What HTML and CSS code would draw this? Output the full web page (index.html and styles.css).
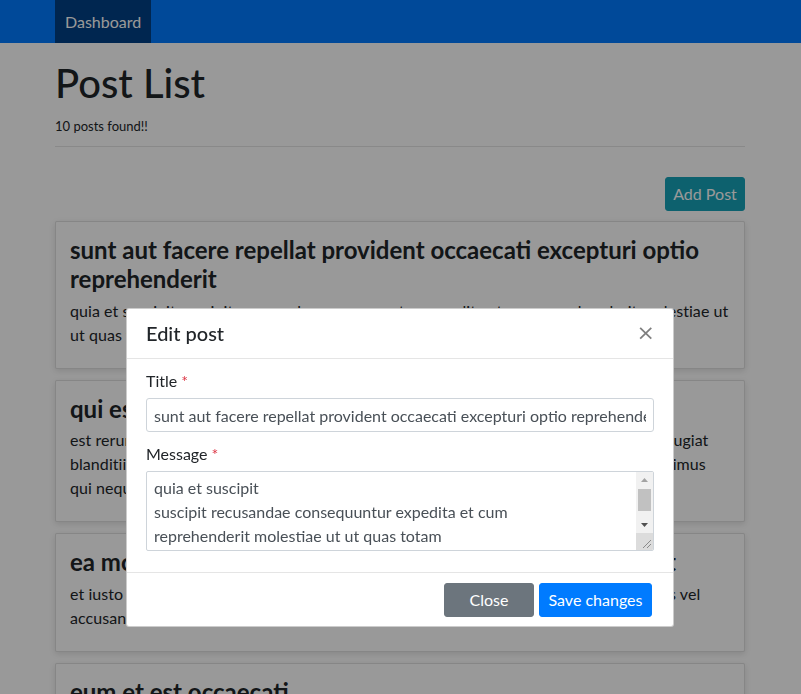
FILE: index.html
```html
<!DOCTYPE html>
<html lang="en">
<head>
<meta charset="utf-8">
<title>Post List</title>
<link rel="stylesheet" href="styles.css">
</head>
<body>
<nav class="navbar">
  <div class="container nav-inner">
    <a class="nav-link active" href="#">Dashboard</a>
  </div>
</nav>

<main class="container">
  <h1 class="page-title">Post List</h1>
  <p class="count">10 posts found!!</p>
  <hr class="divider">
  <div class="toolbar">
    <button class="btn btn-info">Add Post</button>
  </div>

  <div class="card">
    <h3 class="card-title">sunt aut facere repellat provident occaecati excepturi optio reprehenderit</h3>
    <p class="card-text">quia et suscipit suscipit recusandae consequuntur expedita et cum reprehenderit molestiae ut ut quas totam nostrum rerum est autem sunt rem eveniet architecto</p>
  </div>
  <div class="card">
    <h3 class="card-title">qui est esse</h3>
    <p class="card-text">est rerum tempore vitae sequi sint nihil reprehenderit dolor beatae ea dolores neque fugiat blanditiis voluptate porro vel nihil molestiae ut reiciendis qui aperiam non debitis possimus qui neque nisi nulla</p>
  </div>
  <div class="card">
    <h3 class="card-title">ea molestias quasi exercitationem repellat qui ipsa sit aut</h3>
    <p class="card-text">et iusto sed quo iure voluptatem occaecati omnis eligendi aut ad voluptatem doloribus vel accusantium quis pariatur molestiae porro eius odio et labore et velit aut</p>
  </div>
  <div class="card">
    <h3 class="card-title">eum et est occaecati</h3>
    <p class="card-text">ullam et saepe reiciendis voluptatem adipisci sit amet autem assumenda provident rerum culpa quis hic commodi nesciunt rem tenetur doloremque ipsam iure quis sunt voluptatem rerum illo velit</p>
  </div>
</main>

<div class="backdrop"></div>

<div class="modal">
  <div class="modal-dialog">
    <div class="modal-header">
      <h5 class="modal-title">Edit post</h5>
      <button class="close" aria-label="Close">×</button>
    </div>
    <div class="modal-body">
      <div class="form-group">
        <label class="form-label">Title <span class="req">*</span></label>
        <input class="form-control" type="text" value="sunt aut facere repellat provident occaecati excepturi optio reprehenderit">
      </div>
      <div class="form-group">
        <label class="form-label">Message <span class="req">*</span></label>
        <div class="textarea-box">
          <textarea class="textarea" rows="3">quia et suscipit
suscipit recusandae consequuntur expedita et cum
reprehenderit molestiae ut ut quas totam
nostrum rerum est autem sunt rem eveniet architecto</textarea>
          <div class="vscroll" aria-hidden="true">
            <div class="sb-btn">
              <svg width="7" height="4" viewBox="0 0 7 4"><path d="M0 4 L3.5 0 L7 4 Z" fill="#a3a3a3"/></svg>
            </div>
            <div class="sb-track"><div class="sb-thumb"></div></div>
            <div class="sb-btn">
              <svg width="7" height="4" viewBox="0 0 7 4"><path d="M0 0 L7 0 L3.5 4 Z" fill="#505050"/></svg>
            </div>
            <div class="sb-resizer">
              <svg width="17" height="17" viewBox="0 0 17 17"><path d="M15 7 L7 15 M15 11 L11 15" stroke="#8a8a8a" stroke-width="1" fill="none"/></svg>
            </div>
          </div>
        </div>
      </div>
    </div>
    <div class="modal-footer">
      <button class="btn btn-secondary">Close</button>
      <button class="btn btn-primary">Save changes</button>
    </div>
  </div>
</div>
</body>
</html>
```

FILE: styles.css
```css
* { box-sizing: border-box; }

html, body {
  margin: 0;
  padding: 0;
  height: 100%;
  overflow: hidden;
}

body {
  font-family: "Lato", "Noto Sans", sans-serif;
  font-size: 16px;
  line-height: 1.5;
  color: #212529;
  background: #ffffff;
}

.container {
  width: 720px;
  margin: 0 auto 0 40px;
  padding: 0 15px;
}

/* Navbar */
.navbar {
  background: #007bff;
  height: 43px;
}
.nav-inner {
  display: flex;
  height: 100%;
}
.nav-link {
  display: block;
  padding: 0 10px;
  line-height: 43px;
  color: #ffffff;
  text-decoration: none;
  font-size: 16px;
}
.nav-link.active {
  background: #004085;
}

/* Header */
.page-title {
  margin: 16px 0 0;
  font-size: 40px;
  font-weight: 500;
  line-height: 1.2;
}
.count {
  margin: 9px 0 0;
  font-size: 13px;
  line-height: 20px;
}
.divider {
  margin: 10px 0 0;
  border: 0;
  border-top: 1px solid rgba(0,0,0,.1);
}
.toolbar {
  display: flex;
  justify-content: flex-end;
  margin-top: 30px;
  margin-bottom: 10px;
}

/* Buttons */
.btn {
  font-family: inherit;
  font-size: 16px;
  line-height: 24px;
  height: 34px;
  padding: 0 7px;
  border: 1px solid transparent;
  border-radius: 3px;
  color: #ffffff;
  white-space: nowrap;
  cursor: pointer;
}
.btn-info { background: #17a2b8; border-color: #17a2b8; min-width: 80px; }
.btn-secondary { background: #6c757d; border-color: #6c757d; width: 90px; }
.btn-primary { background: #007bff; border-color: #007bff; width: 113px; }

/* Cards */
.card {
  background: #ffffff;
  border: 1px solid rgba(0,0,0,.125);
  border-radius: 2px;
  box-shadow: 0 2px 6px rgba(0,0,0,.12);
  padding: 14px 14px 15px;
  margin-bottom: 11px;
}
.card-title {
  margin: 0 0 5px;
  font-size: 24px;
  font-weight: 700;
  line-height: 1.2;
}
.card-text {
  margin: 0 0 6px;
  font-size: 16px;
  line-height: 24px;
  letter-spacing: 0.06px;
}

/* Backdrop */
.backdrop {
  position: fixed;
  inset: 0;
  background: rgba(0,0,0,.4);
}

/* Modal */
.modal {
  position: fixed;
  inset: 0;
  display: flex;
  justify-content: flex-start;
  align-items: flex-start;
  padding: 308px 0 0 126px;
}
.modal-dialog {
  width: 548px;
  background: #ffffff;
  border: 1px solid rgba(0,0,0,.2);
  border-radius: 3px;
}
.modal-header {
  display: flex;
  justify-content: space-between;
  align-items: center;
  padding: 9px 19px 10px;
  border-bottom: 1px solid #e5e5e5;
}
.modal-title {
  margin: 0;
  font-size: 20px;
  font-weight: 500;
  line-height: 30px;
}
.close {
  background: none;
  border: 0;
  padding: 0;
  margin-right: -1px;
  font-family: "DejaVu Sans", sans-serif;
  font-size: 22px;
  line-height: 1;
  color: #000;
  opacity: .5;
  cursor: pointer;
}
.modal-body {
  padding: 10px 19px 11px;
}
.form-group {
  margin-bottom: 10px;
}
.form-label {
  display: block;
  margin-bottom: 5px;
  line-height: 24px;
}
.req { color: #dc3545; }
.form-control {
  display: block;
  width: 100%;
  font-family: inherit;
  font-size: 16px;
  line-height: 24px;
  color: #495057;
  background: #ffffff;
  border: 1px solid #ced4da;
  border-radius: 3px;
  padding: 4px 7px;
  height: 34px;
  outline: none;
}

/* Textarea with classic scrollbar */
.textarea-box {
  display: flex;
  height: 80px;
  border: 1px solid #ced4da;
  border-radius: 2px;
  background: #ffffff;
  overflow: hidden;
}
.textarea {
  flex: 1;
  min-width: 0;
  border: 0;
  outline: none;
  resize: none;
  overflow: hidden;
  font-family: inherit;
  font-size: 16px;
  line-height: 24px;
  color: #495057;
  padding: 4px 7px;
  background: transparent;
}
.vscroll {
  width: 17px;
  display: flex;
  flex-direction: column;
  background: #f1f1f1;
}
.sb-btn {
  height: 16px;
  display: flex;
  align-items: center;
  justify-content: center;
}
.sb-track {
  flex: 1;
  padding: 1px 2px 0;
}
.sb-thumb {
  height: 22px;
  background: #c1c1c1;
}
.sb-resizer {
  height: 17px;
  background: #dcdcdc;
  display: flex;
}

.modal-footer {
  display: flex;
  justify-content: flex-end;
  gap: 5px;
  padding: 10px 21px 9px;
  border-top: 1px solid #e5e5e5;
}
```
